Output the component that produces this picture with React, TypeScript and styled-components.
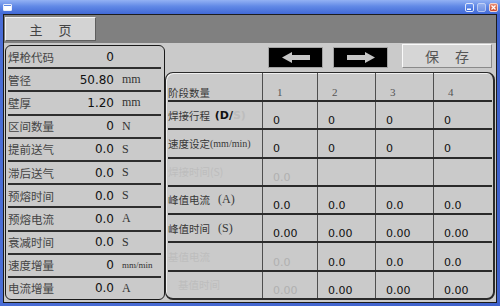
import React from 'react';
import styled, { createGlobalStyle } from 'styled-components';

const CJK = `"Noto Sans CJK SC", "Noto Sans", sans-serif`;
const NUM = `"DejaVu Sans", Verdana, sans-serif`;
const SERIF = `"Liberation Serif", "Times New Roman", serif`;

const GlobalStyle = createGlobalStyle`
    html, body {
        margin: 0;
        padding: 0;
        width: 500px;
        height: 306px;
        overflow: hidden;
        background: #4466cc;
    }
    #root {
        width: 500px;
        height: 306px;
    }
`;

const Window = styled.div`
    width: 500px;
    height: 306px;
    display: flex;
    flex-direction: column;
`;

const TitleBar = styled.div`
    height: 14px;
    flex-shrink: 0;
    display: flex;
    align-items: flex-start;
    justify-content: space-between;
    padding: 3px 2px 0 3px;
    box-sizing: border-box;
    background: linear-gradient(to bottom, #93b2f4 0%, #6189e6 45%, #4169d6 100%);
`;

const AppIcon = styled.div`
    width: 7px;
    height: 5px;
    margin-top: 1px;
    background: #fff;
    border: 1px solid #e8eefc;
    border-radius: 1px;
    box-shadow: inset 0 1px 0 #5d86e4;
`;

const WinButtons = styled.div`
    display: flex;
    gap: 3px;
`;

const WinButton = styled.div<{ $kind: 'min' | 'max' | 'close' }>`
    width: 9px;
    height: 9px;
    box-sizing: border-box;
    border-radius: 2px;
    border: 1px solid ${({ $kind }) => ($kind === 'close' ? '#f3d2cc' : '#dfe7fb')};
    background: ${({ $kind }) =>
        $kind === 'close'
            ? 'linear-gradient(#e98b72, #cc4a2c)'
            : $kind === 'max'
              ? 'linear-gradient(#a6bdf2, #7f9de6)'
              : 'linear-gradient(#6e98f2, #3d69d8)'};
    display: flex;
    align-items: center;
    justify-content: center;
    opacity: ${({ $kind }) => ($kind === 'max' ? 0.7 : 1)};
`;

const Frame = styled.div`
    flex: 1;
    min-height: 0;
    display: flex;
    padding: 0 3px 3px 3px;
    background: linear-gradient(to right, #4a6dd6, #3f62cc);
`;

const Body = styled.div`
    flex: 1;
    min-width: 0;
    display: flex;
    flex-direction: column;
    border: 1px solid #1c1c1c;
    background: #cacaca;
`;

const TopBar = styled.div`
    height: 28px;
    flex-shrink: 0;
    box-sizing: border-box;
    padding: 2px 0 0 1px;
    background: #808080;
    display: flex;
    align-items: flex-start;
`;

const TabButton = styled.div`
    width: 91px;
    height: 24px;
    box-sizing: border-box;
    background: #d3d3d3;
    border-top: 1px solid #f4f4f4;
    border-left: 1px solid #f4f4f4;
    border-bottom: 1px solid #5e5e5e;
    border-right: 1px solid #5e5e5e;
    display: flex;
    align-items: center;
    justify-content: center;
    gap: 16px;
    font-family: ${CJK};
    font-size: 13px;
    color: #444;
`;

const Content = styled.div`
    flex: 1;
    min-height: 0;
    display: flex;
    padding: 2px 1px 2px 1px;
`;

const LeftPanel = styled.div`
    width: 160px;
    flex-shrink: 0;
    box-sizing: border-box;
    border: 1px solid #1a1a1a;
    border-radius: 6px;
    padding: 0 3px 0 2px;
    display: flex;
    flex-direction: column;
`;

const ParamRow = styled.div`
    flex: 1 1 0;
    display: grid;
    grid-template-columns: 64px 42px 1fr;
    align-items: center;
    border-bottom: 2px solid #2e2e2e;

    &:last-child {
        border-bottom: none;
    }
`;

const ParamLabel = styled.span`
    font-family: ${CJK};
    font-size: 11.5px;
    color: #454545;
    white-space: nowrap;
`;

const ParamValue = styled.span`
    text-align: right;
    font-family: ${NUM};
    font-size: 12px;
    color: #111;
`;

const ParamUnit = styled.span<{ $small?: boolean }>`
    padding-left: 8px;
    font-family: ${SERIF};
    font-size: ${({ $small }) => ($small ? '9px' : '12px')};
    color: #333;
    white-space: nowrap;
`;

const RightColumn = styled.div`
    flex: 1;
    min-width: 0;
    display: flex;
    flex-direction: column;
`;

const Toolbar = styled.div`
    height: 27px;
    flex-shrink: 0;
    display: flex;
    align-items: flex-start;
    padding-left: 103px;
`;

const ArrowButton = styled.div`
    width: 55px;
    height: 21px;
    margin-top: 2px;
    margin-right: 10px;
    box-sizing: border-box;
    background: #000;
    border: 1px solid #a2a2a2;
    display: flex;
    align-items: center;
    justify-content: center;
`;

const SaveButton = styled.div`
    width: 90px;
    height: 24px;
    margin-top: -1px;
    margin-left: 4px;
    box-sizing: border-box;
    background: #d6d6d6;
    border-top: 1px solid #fafafa;
    border-left: 1px solid #fafafa;
    border-bottom: 1px solid #8a8a8a;
    border-right: 1px solid #8a8a8a;
    display: flex;
    align-items: center;
    justify-content: center;
    gap: 16px;
    font-family: ${CJK};
    font-size: 14px;
    color: #555;
`;

const TablePanel = styled.div`
    flex: 1;
    min-height: 0;
    display: flex;
    flex-direction: column;
    border: 1px solid #2a2a2a;
    border-right-width: 2px;
    border-bottom-width: 2px;
    border-radius: 8px;
    box-shadow: inset 1px 1px 0 #f0f0f0;
    padding: 0 1px 0 2px;
`;

const TableRow = styled.div`
    flex: 1 1 0;
    display: grid;
    grid-template-columns: 94px 55px 58px 58px 1fr;
    border-bottom: 2px solid #2a2a2a;

    &:last-child {
        border-bottom: none;
    }
`;

const RowLabel = styled.div<{ $faded?: boolean; $indent?: number; $low?: boolean }>`
    display: flex;
    align-items: center;
    padding-left: ${({ $indent }) => $indent ?? 0}px;
    padding-top: ${({ $low }) => ($low ? '12px' : '0')};
    font-family: ${CJK};
    font-size: 10.5px;
    color: ${({ $faded }) => ($faded ? '#bdbdbd' : '#383838')};
    white-space: nowrap;
    overflow: visible;
`;

const Paren = styled.span`
    font-family: ${SERIF};
    font-size: 12px;
    margin-left: 8px;
`;

const SmallParen = styled.span`
    font-family: ${SERIF};
    font-size: 10px;
`;

const BoldParen = styled.span<{ $faded?: boolean }>`
    font-family: ${NUM};
    font-weight: bold;
    font-size: 11px;
    color: ${({ $faded }) => ($faded ? '#bdbdbd' : '#111')};
`;

const Cell = styled.div<{ $faded?: boolean; $header?: boolean }>`
    display: flex;
    align-items: center;
    border-left: 1px solid #4e4e4e;
    padding-left: ${({ $header }) => ($header ? '14px' : '10px')};
    padding-top: 11px;
    font-family: ${({ $header }) => ($header ? SERIF : NUM)};
    font-size: 11px;
    color: ${({ $faded, $header }) => ($faded ? '#b0b0b0' : $header ? '#555' : '#111')};
`;

function LeftArrow() {
    return (
        <svg width="28" height="11" viewBox="0 0 28 11">
            <polygon points="0,5.5 10,0 10,3 28,3 28,8 10,8 10,11" fill="#c6c6c6" />
        </svg>
    );
}

function RightArrow() {
    return (
        <svg width="28" height="11" viewBox="0 0 28 11">
            <polygon points="28,5.5 18,0 18,3 0,3 0,8 18,8 18,11" fill="#c6c6c6" />
        </svg>
    );
}

const params: { label: string; value: string; unit?: string; small?: boolean }[] = [
    { label: '焊枪代码', value: '0' },
    { label: '管径', value: '50.80', unit: 'mm' },
    { label: '壁厚', value: '1.20', unit: 'mm' },
    { label: '区间数量', value: '0', unit: 'N' },
    { label: '提前送气', value: '0.0', unit: 'S' },
    { label: '滞后送气', value: '0.0', unit: 'S' },
    { label: '预熔时间', value: '0.0', unit: 'S' },
    { label: '预熔电流', value: '0.0', unit: 'A' },
    { label: '衰减时间', value: '0.0', unit: 'S' },
    { label: '速度增量', value: '0', unit: 'mm/min', small: true },
    { label: '电流增量', value: '0.0', unit: 'A' },
];

type StageCell = { text: string; faded?: boolean };

const stageRows: { key: string; label: React.ReactNode; faded?: boolean; indent?: number; cells: StageCell[] }[] = [
    {
        key: 'travel',
        label: (
            <>
                焊接行程&nbsp;&nbsp;
                <BoldParen>(D/</BoldParen>
                <BoldParen $faded>S)</BoldParen>
            </>
        ),
        cells: [{ text: '0' }, { text: '0' }, { text: '0' }, { text: '0' }],
    },
    {
        key: 'speed',
        label: (
            <>
                速度设定<SmallParen>(mm/min)</SmallParen>
            </>
        ),
        cells: [{ text: '0' }, { text: '0' }, { text: '0' }, { text: '0' }],
    },
    {
        key: 'weldtime',
        label: '焊接时间(S)',
        faded: true,
        cells: [{ text: '0.0', faded: true }, { text: '' }, { text: '' }, { text: '' }],
    },
    {
        key: 'peakcur',
        label: (
            <>
                峰值电流<Paren>(A)</Paren>
            </>
        ),
        cells: [{ text: '0.0' }, { text: '0.0' }, { text: '0.0' }, { text: '0.0' }],
    },
    {
        key: 'peaktime',
        label: (
            <>
                峰值时间<Paren>(S)</Paren>
            </>
        ),
        cells: [{ text: '0.00' }, { text: '0.00' }, { text: '0.00' }, { text: '0.00' }],
    },
    {
        key: 'basecur',
        label: '基值电流',
        faded: true,
        cells: [{ text: '0.0', faded: true }, { text: '0.0' }, { text: '0.0' }, { text: '0.0' }],
    },
    {
        key: 'basetime',
        label: '基值时间',
        faded: true,
        indent: 10,
        cells: [{ text: '0.00', faded: true }, { text: '0.00' }, { text: '0.00' }, { text: '0.00' }],
    },
];

export default function App() {
    return (
        <>
            <GlobalStyle />
            <Window>
                <TitleBar>
                    <AppIcon />
                    <WinButtons>
                        <WinButton $kind="min">
                            <svg width="5" height="5" viewBox="0 0 5 5">
                                <rect x="0" y="3.5" width="4" height="1.5" fill="#fff" />
                            </svg>
                        </WinButton>
                        <WinButton $kind="max" />
                        <WinButton $kind="close">
                            <svg width="5" height="5" viewBox="0 0 5 5">
                                <path d="M0.5 0.5 L4.5 4.5 M4.5 0.5 L0.5 4.5" stroke="#fff" strokeWidth="1.2" />
                            </svg>
                        </WinButton>
                    </WinButtons>
                </TitleBar>
                <Frame>
                    <Body>
                        <TopBar>
                            <TabButton>
                                <span>主</span>
                                <span>页</span>
                            </TabButton>
                        </TopBar>
                        <Content>
                            <LeftPanel>
                                {params.map((p) => (
                                    <ParamRow key={p.label}>
                                        <ParamLabel>{p.label}</ParamLabel>
                                        <ParamValue>{p.value}</ParamValue>
                                        <ParamUnit $small={p.small}>{p.unit}</ParamUnit>
                                    </ParamRow>
                                ))}
                            </LeftPanel>
                            <RightColumn>
                                <Toolbar>
                                    <ArrowButton>
                                        <LeftArrow />
                                    </ArrowButton>
                                    <ArrowButton>
                                        <RightArrow />
                                    </ArrowButton>
                                    <SaveButton>
                                        <span>保</span>
                                        <span>存</span>
                                    </SaveButton>
                                </Toolbar>
                                <TablePanel>
                                    <TableRow>
                                        <RowLabel $low>阶段数量</RowLabel>
                                        {['1', '2', '3', '4'].map((n) => (
                                            <Cell key={n} $header>
                                                {n}
                                            </Cell>
                                        ))}
                                    </TableRow>
                                    {stageRows.map((row) => (
                                        <TableRow key={row.key}>
                                            <RowLabel $faded={row.faded} $indent={row.indent}>
                                                {row.label}
                                            </RowLabel>
                                            {row.cells.map((c, i) => (
                                                <Cell key={i} $faded={c.faded}>
                                                    {c.text}
                                                </Cell>
                                            ))}
                                        </TableRow>
                                    ))}
                                </TablePanel>
                            </RightColumn>
                        </Content>
                    </Body>
                </Frame>
            </Window>
        </>
    );
}
